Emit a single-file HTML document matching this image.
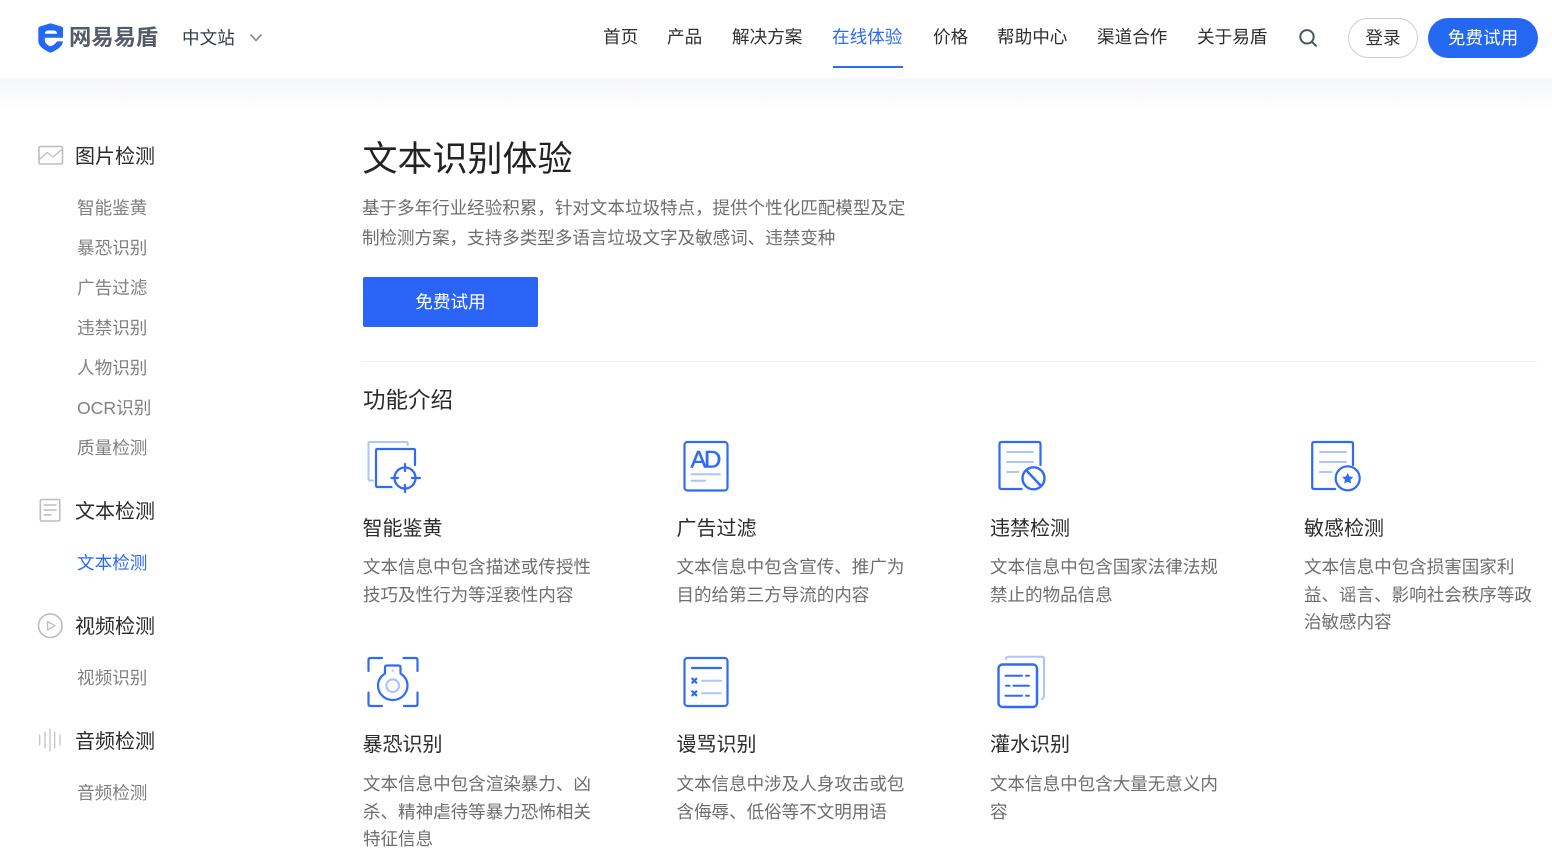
<!DOCTYPE html>
<html lang="zh-CN">
<head>
<meta charset="utf-8">
<title>文本识别体验</title>
<style>
html,body{margin:0;padding:0;background:#fff}
body{width:1552px;height:861px;position:relative;overflow:hidden;font-family:"Liberation Sans","Noto Sans CJK SC",sans-serif;color:#2e2e2e}
.t{position:absolute;white-space:nowrap;height:30px;line-height:30px;font-size:17.6px}
.g{color:#808080}
.d{color:#6e6e6e;font-size:17.55px}
.h{font-size:20px;color:#2b2b2b}
#head{position:absolute;left:0;top:0;width:1552px;height:78px;background:#fff}
#fade{position:absolute;left:0;top:78px;width:1552px;height:34px;background:linear-gradient(#f5f6f8,#fbfbfc 60%,#fff)}
svg{position:absolute;left:0;top:0}
.btn{position:absolute;text-align:center;box-sizing:border-box}
</style>
</head>
<body>
<div id="fade"></div>
<div id="head"></div>

<div class="t" style="left:69px;top:23px;font-size:22.3px;color:#555b68;font-weight:700">网易易盾</div>
<div class="t" style="left:182px;top:23px;color:#333a47">中文站</div>

<div class="t" style="left:603px;top:22px">首页</div>
<div class="t" style="left:667px;top:22px">产品</div>
<div class="t" style="left:732px;top:22px">解决方案</div>
<div class="t" style="left:832px;top:22px;color:#2a6af5">在线体验</div>
<div class="t" style="left:933px;top:22px">价格</div>
<div class="t" style="left:997px;top:22px">帮助中心</div>
<div class="t" style="left:1097px;top:22px">渠道合作</div>
<div class="t" style="left:1197px;top:22px">关于易盾</div>
<div style="position:absolute;left:833px;top:66px;width:70px;height:2px;background:#2a6af5"></div>

<div class="btn" style="left:1348px;top:18px;width:70px;height:40px;border:1px solid #ccced3;border-radius:20px;line-height:38px;font-size:17.6px;color:#333">登录</div>
<div class="btn" style="left:1428px;top:18px;width:110px;height:40px;background:#2468f2;border-radius:20px;line-height:40px;font-size:17.6px;color:#fff">免费试用</div>

<div class="t h" style="left:75px;top:142px">图片检测</div>
<div class="t g" style="left:77px;top:193px">智能鉴黄</div>
<div class="t g" style="left:77px;top:233px">暴恐识别</div>
<div class="t g" style="left:77px;top:273px">广告过滤</div>
<div class="t g" style="left:77px;top:313px">违禁识别</div>
<div class="t g" style="left:77px;top:353px">人物识别</div>
<div class="t g" style="left:77px;top:393px">OCR识别</div>
<div class="t g" style="left:77px;top:433px">质量检测</div>
<div class="t h" style="left:75px;top:497px">文本检测</div>
<div class="t" style="left:77px;top:548px;color:#2a6af5">文本检测</div>
<div class="t h" style="left:75px;top:612px">视频检测</div>
<div class="t g" style="left:77px;top:663px">视频识别</div>
<div class="t h" style="left:75px;top:727px">音频检测</div>
<div class="t g" style="left:77px;top:778px">音频检测</div>

<div class="t" style="left:362.5px;top:135px;height:50px;line-height:50px;font-size:35px;color:#222">文本识别体验</div>
<div class="t d" style="left:362px;top:193px">基于多年行业经验积累，针对文本垃圾特点，提供个性化匹配模型及定</div>
<div class="t d" style="left:362px;top:223px">制检测方案，支持多类型多语言垃圾文字及敏感词、违禁变种</div>
<div class="btn" style="left:363px;top:277px;width:175px;height:50px;background:#2a64f6;border-radius:2px;line-height:51px;font-size:17.6px;color:#fff">免费试用</div>
<div style="position:absolute;left:363px;top:361px;width:1174px;height:1px;background:#eeeff1"></div>
<div class="t" style="left:363px;top:386px;font-size:22.5px;color:#2b2b2b">功能介绍</div>

<div class="t h" style="left:362.5px;top:514px">智能鉴黄</div>
<div class="t d" style="left:363px;top:552px">文本信息中包含描述或传授性</div>
<div class="t d" style="left:363px;top:580px">技巧及性行为等淫亵性内容</div>

<div class="t h" style="left:676.5px;top:514px">广告过滤</div>
<div class="t d" style="left:676.5px;top:552px">文本信息中包含宣传、推广为</div>
<div class="t d" style="left:676.5px;top:580px">目的给第三方导流的内容</div>

<div class="t h" style="left:990px;top:514px">违禁检测</div>
<div class="t d" style="left:990px;top:552px">文本信息中包含国家法律法规</div>
<div class="t d" style="left:990px;top:580px">禁止的物品信息</div>

<div class="t h" style="left:1304px;top:514px">敏感检测</div>
<div class="t d" style="left:1304px;top:552px">文本信息中包含损害国家利</div>
<div class="t d" style="left:1304px;top:580px">益、谣言、影响社会秩序等政</div>
<div class="t d" style="left:1304px;top:607px">治敏感内容</div>

<div class="t h" style="left:362.5px;top:730px">暴恐识别</div>
<div class="t d" style="left:363px;top:769px">文本信息中包含渲染暴力、凶</div>
<div class="t d" style="left:363px;top:797px">杀、精神虐待等暴力恐怖相关</div>
<div class="t d" style="left:363px;top:824px">特征信息</div>

<div class="t h" style="left:676.5px;top:730px">谩骂识别</div>
<div class="t d" style="left:676.5px;top:769px">文本信息中涉及人身攻击或包</div>
<div class="t d" style="left:676.5px;top:797px">含侮辱、低俗等不文明用语</div>

<div class="t h" style="left:990px;top:730px">灌水识别</div>
<div class="t d" style="left:990px;top:769px">文本信息中包含大量无意义内</div>
<div class="t d" style="left:990px;top:797px">容</div>

<svg width="1552" height="861" viewBox="0 0 1552 861" fill="none" stroke-linecap="round" stroke-linejoin="round">
  <!-- logo -->
  <path d="M38.3 28.5 Q38.3 27 39.8 26.5 L50.5 23.2 L61.5 26.5 Q63 27 63 28.5 V41 C63 46.5 56 50.5 50.5 52.8 C45 50.5 38.3 46.5 38.3 41 Z" fill="#2468f8"/>
  <path d="M45 33.8 Q45 30.5 48 30.5 H54 Q56.8 30.5 57 33.8 Z" fill="#fff"/>
  <path d="M44.8 37.8 H64 V41.4 H57 C55.5 43.8 53 45.5 50.5 46.4 C47.5 45.2 44.8 43 44.8 40.5 Z" fill="#fff"/>
  <!-- chevron -->
  <path d="M251 35 L256 40.5 L261 35" stroke="#8a8f98" stroke-width="1.7"/>
  <!-- search -->
  <circle cx="1307" cy="36.8" r="6.7" stroke="#4b5260" stroke-width="2"/>
  <path d="M1312 41.8 L1316 45.8" stroke="#4b5260" stroke-width="2"/>

  <!-- sidebar icons -->
  <rect x="39" y="146.5" width="23.5" height="17.5" rx="1.5" stroke="#bdbdbd" stroke-width="1.6"/>
  <path d="M39 160 L47 152.5 L53 157 L62 149.5" stroke="#bdbdbd" stroke-width="1.2"/>
  <rect x="40.3" y="499.5" width="19.5" height="21.5" rx="1.5" stroke="#bdbdbd" stroke-width="1.6"/>
  <path d="M44 505 H56 M44 510 H56 M44 515 H51" stroke="#bdbdbd" stroke-width="1.4"/>
  <circle cx="50.3" cy="625.7" r="11.8" stroke="#bdbdbd" stroke-width="1.6"/>
  <path d="M47.5 621.5 L55 625.7 L47.5 630 Z" stroke="#bdbdbd" stroke-width="1.3"/>
  <path d="M39.7 735 V745 M45 732 V748 M50 729 V751 M54.7 732 V748 M60 735 V745" stroke="#c4c4c4" stroke-width="1.3"/>

  <!-- 智能鉴黄 -->
  <path d="M373 480.5 H370 Q368.5 480.5 368.5 479 V443.5 Q368.5 442 370 442 H406 Q407.7 442 407.7 443.5 V445" stroke="#adc4fc" stroke-width="2"/>
  <path d="M391.5 487 H377.5 Q376 487 376 485.5 V450.5 Q376 449 377.5 449 H413.5 Q415 449 415 450.5 V465" stroke="#2f6bf7" stroke-width="2.2"/>
  <circle cx="405" cy="478" r="10.5" stroke="#2f6bf7" stroke-width="2.3"/>
  <path d="M391.5 478 H398 M412 478 H420 M405 464 V471 M405 485 V492" stroke="#2f6bf7" stroke-width="2.2"/>

  <!-- AD -->
  <rect x="684.5" y="442" width="43" height="48.5" rx="3" stroke="#2f6bf7" stroke-width="2.2"/>
  <text x="690.5" y="467.5" font-family="Liberation Sans" font-size="24" letter-spacing="-2.5" fill="#2f6bf7" stroke="#2f6bf7" stroke-width=".5">AD</text>
  <path d="M691.5 474.3 H720 M691.5 480.7 H705" stroke="#adc4fc" stroke-width="2"/>

  <!-- 违禁检测 -->
  <path d="M1021.5 489 H1001.5 Q999.5 489 999.5 487 V444 Q999.5 442 1001.5 442 H1038.5 Q1040.5 442 1040.5 444 V465" stroke="#2f6bf7" stroke-width="2.2"/>
  <path d="M1007 452 H1033 M1007 462 H1033 M1007 472 H1018.5" stroke="#adc4fc" stroke-width="2"/>
  <circle cx="1033.5" cy="478.3" r="11" stroke="#2f6bf7" stroke-width="2.4"/>
  <path d="M1026.5 470.5 L1041 486" stroke="#2f6bf7" stroke-width="2.4"/>

  <!-- 敏感检测 -->
  <path d="M1335 489 H1314.2 Q1312.2 489 1312.2 487 V444 Q1312.2 442 1314.2 442 H1351 Q1353 442 1353 444 V465" stroke="#2f6bf7" stroke-width="2.2"/>
  <path d="M1320 452 H1346 M1320 462 H1346 M1320 472 H1332" stroke="#adc4fc" stroke-width="2"/>
  <circle cx="1347.7" cy="478.3" r="12" stroke="#2f6bf7" stroke-width="2.2"/>
  <path d="M1347.7 473.5 L1349.2 476.8 L1352.7 477.2 L1350.1 479.6 L1350.8 483 L1347.7 481.3 L1344.6 483 L1345.3 479.6 L1342.7 477.2 L1346.2 476.8 Z" fill="#2f6bf7" stroke="#2f6bf7" stroke-width=".6"/>

  <!-- 暴恐识别 -->
  <path d="M368.5 671 V660 Q368.5 658 370.5 658 H382 M403.5 658 H415.5 Q417.5 658 417.5 660 V671 M417.5 692.5 V704 Q417.5 706 415.5 706 H404 M382 706 H370.5 Q368.5 706 368.5 704 V692.5" stroke="#2f6bf7" stroke-width="2.2"/>
  <path d="M385 673.5 V667.5 Q385 665.5 387 665.5 H398.5 Q400.5 665.5 400.5 667.5 V673.5 C405 676.5 407.5 681 407.5 685.5 C407.5 693.5 401 700 392.7 700 C384.5 700 378 693.5 378 685.5 C378 681 380.5 676.5 385 673.5 Z" stroke="#2f6bf7" stroke-width="2.2"/>
  <circle cx="392.7" cy="685.7" r="6.3" stroke="#adc4fc" stroke-width="2.2"/>
  <circle cx="392.7" cy="670.7" r="1.2" fill="#adc4fc"/>

  <!-- 谩骂识别 -->
  <rect x="684.5" y="658" width="43" height="48" rx="3" stroke="#2f6bf7" stroke-width="2.2"/>
  <path d="M692 668 H721" stroke="#2f6bf7" stroke-width="2.2"/>
  <path d="M692.3 678.7 L696.3 682.7 M696.3 678.7 L692.3 682.7 M692.3 691.3 L696.3 695.3 M696.3 691.3 L692.3 695.3" stroke="#2f6bf7" stroke-width="2.2"/>
  <path d="M702 680.7 H721 M702 693.3 H721" stroke="#adc4fc" stroke-width="2"/>

  <!-- 灌水识别 -->
  <path d="M1006 659 Q1006 656.7 1008.5 656.7 H1041.5 Q1044 656.7 1044 659 V696 Q1044 698 1042 699" stroke="#adc4fc" stroke-width="2"/>
  <rect x="998.5" y="664.5" width="38.5" height="42.5" rx="4" fill="#fff" stroke="#2f6bf7" stroke-width="2.4"/>
  <path d="M1005.5 675.7 H1022 M1026 675.7 H1029 M1006 685.7 H1009.5 M1013.5 685.7 H1029 M1005.5 695.7 H1022 M1026 695.7 H1029" stroke="#2f6bf7" stroke-width="2"/>
</svg>
</body>
</html>
